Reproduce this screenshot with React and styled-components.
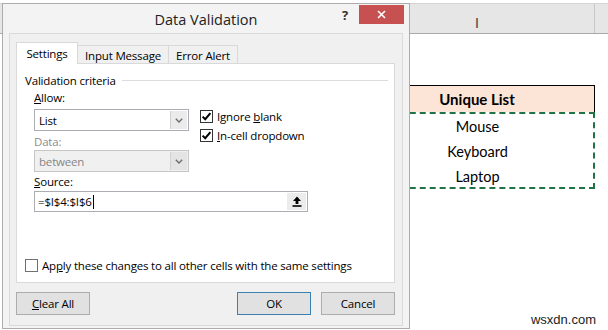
import React from "react";
import styled, { createGlobalStyle } from "styled-components";

const GlobalStyle = createGlobalStyle`
  html, body {
    margin: 0;
    padding: 0;
  }
  body {
    width: 608px;
    height: 330px;
    overflow: hidden;
    background: #fff;
    font-family: "Open Sans", "Noto Sans", sans-serif;
  }
`;

const Page = styled.div`
  position: relative;
  width: 608px;
  height: 330px;
  overflow: hidden;
`;

/* ---------- spreadsheet behind the dialog ---------- */

const ColumnHeaderBar = styled.div`
  margin-top: 3px;
  height: 29px;
  background: #e6e6e6;
  border-top: 1px solid #d4d4d4;
  border-bottom: 1px solid #a8a8a8;
  display: grid;
  grid-template-columns: 360px 235px 1fr;
`;

const ColumnHead = styled.div`
  display: flex;
  align-items: flex-end;
  justify-content: center;
  padding-bottom: 3px;
  box-sizing: border-box;
  line-height: 14px;
  border-right: ${({ $last }) => ($last ? "none" : "1px solid #c8c8c8")};
  font-family: Lato, "Liberation Sans", sans-serif;
  font-size: 14px;
  color: #444;
`;

const SheetBody = styled.div`
  padding-left: 360px;
  padding-top: 51px;
  display: flex;
  flex-direction: column;
  width: 235px;
  font-family: Lato, "Liberation Sans", sans-serif;
  font-size: 14.5px;
  color: #000;
`;

const HeaderCell = styled.div`
  height: 27px;
  box-sizing: border-box;
  background: #fce4d6;
  border-top: 1px solid #000;
  border-right: 1px solid #000;
  display: flex;
  align-items: center;
  justify-content: center;
  font-weight: 700;
  font-size: 15px;
`;

const CopyMarquee = styled.div`
  height: 77px;
  box-sizing: border-box;
  border: 2px dashed #217346;
  display: flex;
  flex-direction: column;
`;

const ListItem = styled.div`
  height: 25px;
  flex: none;
  display: flex;
  align-items: center;
  justify-content: center;
`;

const Watermark = styled.div`
  position: absolute;
  right: 12px;
  bottom: 3px;
  font-family: "Liberation Sans", Arial, sans-serif;
  font-size: 13px;
  color: #222;
`;

/* ---------- dialog window ---------- */

const Dialog = styled.div`
  position: absolute;
  left: 2px;
  top: 3px;
  width: 408px;
  height: 326px;
  box-sizing: border-box;
  background: #f3f3f3;
  border: 1px solid #acacac;
  display: flex;
  flex-direction: column;
  font-size: 11.5px;
  letter-spacing: -0.18px;
  color: #000;
`;

const TitleBar = styled.div`
  height: 29px;
  flex: none;
  display: grid;
  grid-template-columns: 1fr auto 1fr;
  align-items: center;
`;

const Title = styled.div`
  grid-column: 2;
  font-size: 14.5px;
  letter-spacing: 0;
  color: #222;
  padding-top: 1px;
`;

const WindowControls = styled.div`
  grid-column: 3;
  justify-self: end;
  align-self: start;
  display: flex;
  align-items: flex-start;
  padding-right: 5px;
`;

const HelpButton = styled.div`
  width: 14px;
  height: 19px;
  margin-top: 1px;
  margin-right: 7px;
  display: flex;
  align-items: center;
  justify-content: center;
  font-size: 13px;
  font-weight: 700;
  color: #333;
`;

const CloseButton = styled.div`
  width: 45px;
  height: 19px;
  margin-top: 1px;
  background: #c75050;
  display: flex;
  align-items: center;
  justify-content: center;
`;

const Client = styled.div`
  flex: 1;
  margin: 0 6px 2px 6px;
  border: 1px solid #dadada;
  background: #f0f0f0;
  padding: 8px 7px 0 6px;
  display: flex;
  flex-direction: column;
`;

const TabStrip = styled.div`
  height: 21px;
  display: flex;
  align-items: flex-end;
`;

const Tab = styled.div`
  position: relative;
  box-sizing: border-box;
  width: ${({ $w }) => $w}px;
  height: ${({ $active }) => ($active ? 22 : 18)}px;
  margin-bottom: ${({ $active }) => ($active ? -1 : 0)}px;
  margin-left: ${({ $first }) => ($first ? 0 : -1)}px;
  z-index: ${({ $active }) => ($active ? 2 : 1)};
  background: ${({ $active }) => ($active ? "#fff" : "#f0f0f0")};
  border: 1px solid #d9d9d9;
  border-bottom: none;
  display: flex;
  align-items: center;
  justify-content: center;
  padding-top: ${({ $active }) => ($active ? 0 : 1)}px;
`;

const Panel = styled.div`
  height: 220px;
  box-sizing: border-box;
  background: #fff;
  border: 1px solid #d9d9d9;
  padding-left: 8px;
  display: flex;
  flex-direction: column;
`;

const Legend = styled.div`
  margin-top: 8px;
  margin-right: 6px;
  height: 16px;
  display: flex;
  align-items: center;
  gap: 6px;
  &::after {
    content: "";
    flex: 1;
    height: 1px;
    background: #dcdcdc;
  }
`;

const Fields = styled.div`
  padding-left: 9px;
  display: flex;
  flex-direction: column;
`;

const CriteriaRow = styled.div`
  margin-top: 2px;
  display: flex;
`;

const LeftColumn = styled.div`
  width: 155px;
  display: flex;
  flex-direction: column;
`;

const Label = styled.div`
  height: 16px;
  line-height: 16px;
  margin-top: ${({ $mt }) => $mt || 0}px;
  margin-bottom: ${({ $mb }) => $mb || 0}px;
  color: ${({ $disabled }) => ($disabled ? "#8c8c8c" : "#000")};
`;

const SelectBox = styled.div`
  height: 22px;
  box-sizing: border-box;
  border: 1px solid ${({ $disabled }) => ($disabled ? "#c6c6c6" : "#abadb3")};
  background: ${({ $disabled }) => ($disabled ? "#f0f0f0" : "#fff")};
  color: ${({ $disabled }) => ($disabled ? "#868686" : "#000")};
  display: flex;
  align-items: stretch;
`;

const SelectValue = styled.div`
  flex: 1;
  padding-left: 4px;
  display: flex;
  align-items: center;
`;

const ArrowButton = styled.div`
  width: 16px;
  margin: 1px;
  background: ${({ $disabled }) => ($disabled ? "#e4e4e4" : "#ebebeb")};
  border-left: 1px solid ${({ $disabled }) => ($disabled ? "#d2d2d2" : "#cfcfcf")};
  display: flex;
  align-items: center;
  justify-content: center;
`;

const Checks = styled.div`
  margin-left: 11px;
  margin-top: 17px;
  display: flex;
  flex-direction: column;
`;

const CheckRow = styled.label`
  height: ${({ $h }) => $h || 19}px;
  display: flex;
  align-items: center;
  gap: 4px;
`;

const Box = styled.span`
  width: 13px;
  height: 13px;
  box-sizing: border-box;
  border: 1px solid ${({ $checked }) => ($checked ? "#333" : "#707070")};
  background: #fff;
  display: flex;
  align-items: center;
  justify-content: center;
  flex: none;
`;

const RefInput = styled.div`
  margin-top: 1px;
  width: 274px;
  height: 21px;
  box-sizing: border-box;
  border: 1px solid #abadb3;
  background: #fff;
  display: flex;
  align-items: stretch;
`;

const RefText = styled.div`
  flex: 1;
  padding-left: 3px;
  display: flex;
  align-items: center;
`;

const Caret = styled.span`
  width: 1px;
  height: 14px;
  background: #000;
  margin-left: 1px;
`;

const RefButton = styled.div`
  width: 19px;
  margin: 1px;
  background: #ececec;
  display: flex;
  align-items: center;
  justify-content: center;
`;

const ApplyRow = styled(CheckRow)`
  margin-top: auto;
  margin-bottom: 8px;
`;

const ButtonRow = styled.div`
  margin-top: 9px;
  display: flex;
  gap: 10px;
`;

const Spacer = styled.div`
  flex: 1;
`;

const DialogButton = styled.div`
  width: 74px;
  height: 23px;
  box-sizing: border-box;
  background: #e1e1e1;
  border: 1px solid ${({ $default }) => ($default ? "#3c7fb1" : "#adadad")};
  display: flex;
  align-items: center;
  justify-content: center;
`;

const Chevron = () => (
  <svg width="8" height="5" viewBox="0 0 8 5">
    <path d="M0.8 0.8 L4 4 L7.2 0.8" fill="none" stroke="#6a6a6a" strokeWidth="1.3" />
  </svg>
);

const Tick = () => (
  <svg width="11" height="11" viewBox="0 0 11 11">
    <path d="M1.6 5.6 L4.2 8.2 L9.4 2.2" fill="none" stroke="#000" strokeWidth="2" />
  </svg>
);

const CollapseIcon = () => (
  <svg width="10" height="11" viewBox="0 0 10 11">
    <path d="M5 0.5 L1 5 H3.6 V8 H6.4 V5 H9 Z" fill="#000" />
    <rect x="0.5" y="9.2" width="9" height="1.6" fill="#000" />
  </svg>
);

const CloseIcon = () => (
  <svg width="9" height="9" viewBox="0 0 9 9">
    <path d="M1 1 L8 8 M8 1 L1 8" stroke="#fff" strokeWidth="1.6" />
  </svg>
);

const Select = ({ value, disabled }) => (
  <SelectBox $disabled={disabled}>
    <SelectValue>{value}</SelectValue>
    <ArrowButton $disabled={disabled}>
      <Chevron />
    </ArrowButton>
  </SelectBox>
);

const Checkbox = ({ checked, children, height }) => (
  <CheckRow $h={height}>
    <Box $checked={checked}>{checked && <Tick />}</Box>
    <span>{children}</span>
  </CheckRow>
);

export default function App() {
  return (
    <Page>
      <GlobalStyle />

      <ColumnHeaderBar>
        <ColumnHead />
        <ColumnHead>I</ColumnHead>
        <ColumnHead $last />
      </ColumnHeaderBar>
      <SheetBody>
        <HeaderCell>Unique List</HeaderCell>
        <CopyMarquee>
          <ListItem>Mouse</ListItem>
          <ListItem>Keyboard</ListItem>
          <ListItem>Laptop</ListItem>
        </CopyMarquee>
      </SheetBody>
      <Watermark>wsxdn.com</Watermark>

      <Dialog>
        <TitleBar>
          <Title>Data Validation</Title>
          <WindowControls>
            <HelpButton>?</HelpButton>
            <CloseButton>
              <CloseIcon />
            </CloseButton>
          </WindowControls>
        </TitleBar>

        <Client>
          <TabStrip>
            <Tab $active $first $w={62}>Settings</Tab>
            <Tab $w={92}>Input Message</Tab>
            <Tab $w={70}>Error Alert</Tab>
          </TabStrip>

          <Panel>
            <Legend>Validation criteria</Legend>
            <Fields>
              <CriteriaRow>
                <LeftColumn>
                  <Label $mb={3}>
                    <u>A</u>llow:
                  </Label>
                  <Select value="List" />
                  <Label $mt={3} $disabled>
                    Data:
                  </Label>
                  <Select value="between" disabled />
                </LeftColumn>
                <Checks>
                  <Checkbox checked>
                    Ignore <u>b</u>lank
                  </Checkbox>
                  <Checkbox checked>
                    <u>I</u>n-cell dropdown
                  </Checkbox>
                </Checks>
              </CriteriaRow>
              <Label $mt={2}>
                <u>S</u>ource:
              </Label>
              <RefInput>
                <RefText>
                  =$I$4:$I$6
                  <Caret />
                </RefText>
                <RefButton>
                  <CollapseIcon />
                </RefButton>
              </RefInput>
            </Fields>
            <ApplyRow $h={18}>
              <Box />
              <span>
                Ap<u>p</u>ly these changes to all other cells with the same settings
              </span>
            </ApplyRow>
          </Panel>

          <ButtonRow>
            <DialogButton>
              <span>
                <u>C</u>lear All
              </span>
            </DialogButton>
            <Spacer />
            <DialogButton $default>OK</DialogButton>
            <DialogButton>Cancel</DialogButton>
          </ButtonRow>
        </Client>
      </Dialog>
    </Page>
  );
}
